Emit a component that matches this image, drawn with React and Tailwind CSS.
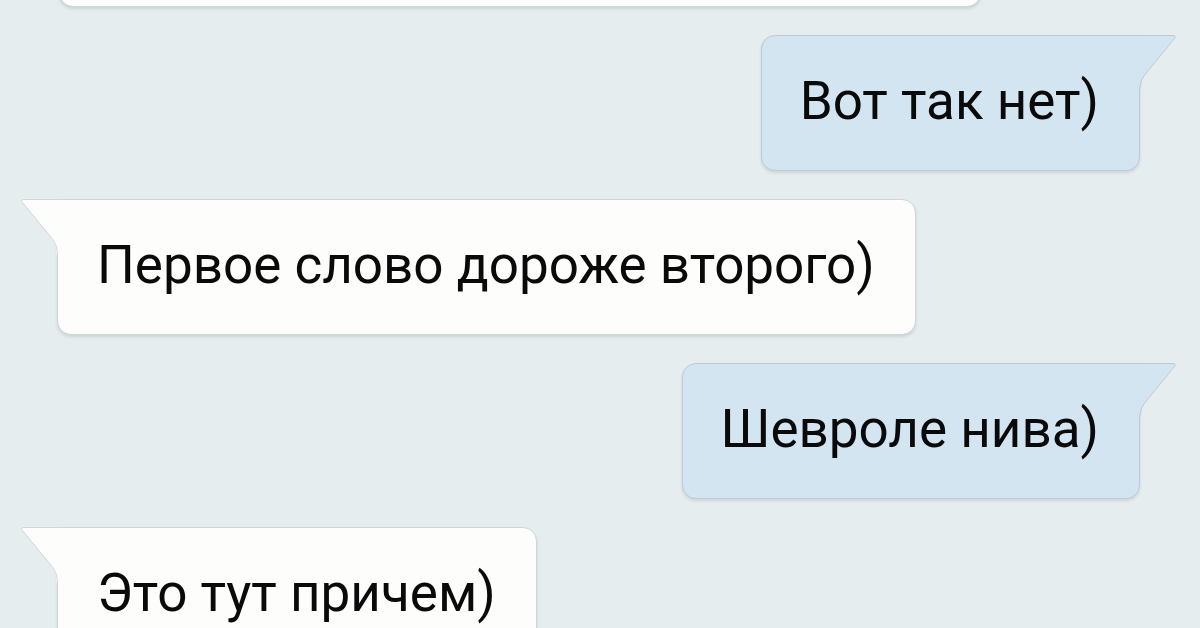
export default function App() {
  const font = { fontFamily: "Roboto, 'Noto Sans', sans-serif" };
  return (
    <div
      className="w-[1200px] h-[628px] overflow-hidden bg-[#e6edef] text-[#0a0a0a]"
      style={font}
    >
      <div className="flex flex-col gap-[28px]">
        {/* top (cut off) incoming bubble */}
        <div className="self-start ml-[59px] -mt-[93px] w-[922px] h-[100px] rounded-[14px] bg-[#fdfefc] border border-[#cdd6da] shadow-[0_2px_3px_rgba(60,80,90,0.15)]" />

        <Outgoing text="Вот так нет)" />
        <Incoming text="Первое слово дороже второго)" />
        <Outgoing text="Шевроле нива)" />
        <Incoming text="Это тут причем)" />
      </div>
    </div>
  );
}

function Outgoing({ text }) {
  return (
    <div className="self-end mr-[60px] relative">
      <div className="rounded-[14px] rounded-tr-none bg-[#d4e5f2] border border-[#bccbd6] shadow-[0_2px_3px_rgba(60,80,90,0.15)] pl-[38px] pr-[40px] pt-[35px] pb-[39px] text-[53px] leading-[60px] whitespace-nowrap">
        {text}
      </div>
      <svg
        className="absolute top-0 left-[calc(100%-1px)]"
        width="38"
        height="56"
        viewBox="0 0 38 56"
      >
        <path
          d="M0 0.5 H34 Q37.5 0.5 35.5 3.5 L8 37 Q1.5 45 1.5 56 L0 56 Z"
          fill="#d4e5f2"
        />
        <path
          d="M0 0.5 H34 Q37.5 0.5 35.5 3.5 L8 37 Q0.5 45 0.5 56"
          fill="none"
          stroke="#bccbd6"
          strokeWidth="1"
        />
      </svg>
    </div>
  );
}

function Incoming({ text }) {
  return (
    <div className="self-start ml-[57px] relative">
      <div className="rounded-[14px] rounded-tl-none bg-[#fdfefc] border border-[#cdd6da] shadow-[0_2px_3px_rgba(60,80,90,0.15)] pl-[39px] pr-[40px] pt-[35px] pb-[39px] text-[53px] leading-[60px] whitespace-nowrap">
        {text}
      </div>
      <svg
        className="absolute top-0 right-[calc(100%-1px)]"
        width="38"
        height="56"
        viewBox="0 0 38 56"
      >
        <path
          d="M38 0.5 H4 Q0.5 0.5 2.5 3.5 L30 37 Q36.5 45 36.5 56 L38 56 Z"
          fill="#fdfefc"
        />
        <path
          d="M38 0.5 H4 Q0.5 0.5 2.5 3.5 L30 37 Q37.5 45 37.5 56"
          fill="none"
          stroke="#cdd6da"
          strokeWidth="1"
        />
      </svg>
    </div>
  );
}
